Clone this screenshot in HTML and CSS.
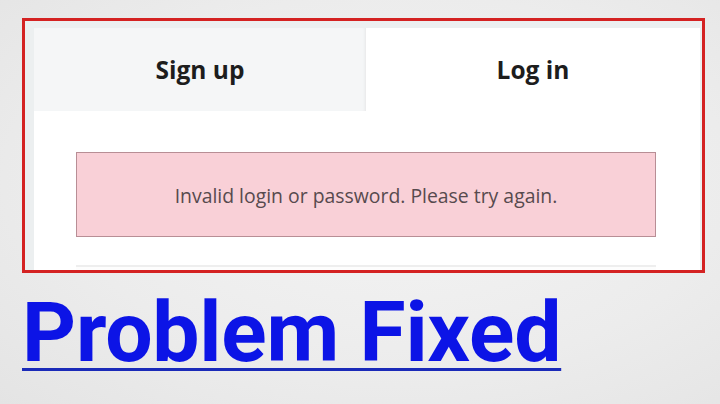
FILE: index.html
```html
<!DOCTYPE html>
<html lang="en">
<head>
<meta charset="utf-8">
<title>Problem Fixed</title>
<link rel="stylesheet" href="styles.css">
</head>
<body>
<main class="page">
  <section class="frame">
    <div class="card">
      <div class="tabs">
        <div class="tab tab-inactive">Sign up</div>
        <div class="tab tab-active">Log in</div>
      </div>
      <div class="alert">Invalid login or password. Please try again.</div>
      <div class="input-stub"></div>
    </div>
  </section>
  <h1 class="headline">Problem Fixed</h1>
</main>
</body>
</html>
```
FILE: styles.css
```css
* { box-sizing: border-box; }
html, body { margin: 0; padding: 0; }
body {
  width: 720px;
  height: 404px;
  overflow: hidden;
  background: radial-gradient(ellipse at 55% 45%, #f4f4f4 0%, #ececec 60%, #e4e4e4 100%);
}
.page {
  padding: 18px 0 0 22px;
  display: flex;
  flex-direction: column;
  align-items: flex-start;
}
.frame {
  width: 683px;
  height: 255px;
  border: 3px solid #d42222;
  background: #eceff0;
  padding: 7px 2px 0 9px;
  display: flex;
}
.card {
  flex: 1;
  background: #ffffff;
  display: flex;
  flex-direction: column;
  overflow: hidden;
}
.tabs {
  display: flex;
  height: 83px;
  flex-shrink: 0;
}
.tab {
  display: flex;
  align-items: center;
  justify-content: center;
  font-family: "Open Sans", "Liberation Sans", sans-serif;
  font-weight: 700;
  font-size: 24.5px;
  color: #1d1d1d;
}
.tab-inactive {
  width: 332px;
  background: #f5f6f7;
  box-shadow: inset -3px 0 3px -2px #e6e7e8;
}
.tab-active {
  flex: 1;
  background: #ffffff;
}
.alert {
  margin: 41px 44px 0 42px;
  height: 85px;
  background: #f9d0d7;
  border: 1px solid #b88e95;
  display: flex;
  align-items: center;
  justify-content: center;
  font-family: "Open Sans", "Liberation Sans", sans-serif;
  font-size: 19.4px;
  color: #574a4e;
  padding-top: 2px;
}
.input-stub {
  margin: 28px 44px 0 42px;
  flex: 1;
  border-top: 2px solid #eeeeee;
  background: #fdfdfd;
}
.headline {
  margin: 18px 0 0 0;
  font-family: Roboto, "Liberation Sans", sans-serif;
  font-weight: 700;
  font-size: 84px;
  line-height: 84px;
  letter-spacing: -0.25px;
  color: #0c14e6;
  text-decoration: underline;
  text-decoration-color: #1a2ab8;
  text-decoration-thickness: 3px;
  text-underline-offset: 7px;
}
```
